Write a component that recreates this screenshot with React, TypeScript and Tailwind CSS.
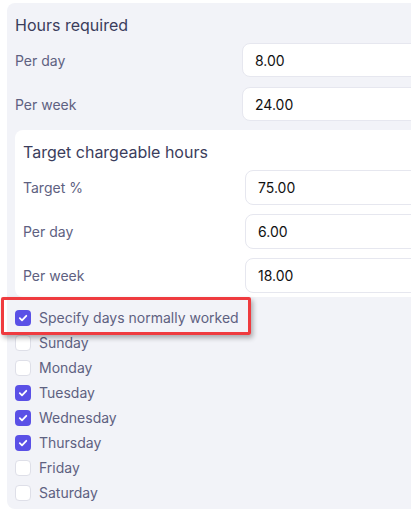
const days = [
  { name: 'Sunday', checked: false },
  { name: 'Monday', checked: false },
  { name: 'Tuesday', checked: true },
  { name: 'Wednesday', checked: true },
  { name: 'Thursday', checked: true },
  { name: 'Friday', checked: false },
  { name: 'Saturday', checked: false },
];

function Box({ checked }: { checked: boolean }) {
  if (checked) {
    return (
      <span className="flex h-4 w-4 shrink-0 items-center justify-center rounded-[4px] bg-[#5a50e6]">
        <svg width="10" height="10" viewBox="0 0 10 10" fill="none">
          <path d="M1.8 5.2 4 7.3 8.3 2.8" stroke="white" strokeWidth="1.8" strokeLinecap="round" strokeLinejoin="round" />
        </svg>
      </span>
    );
  }
  return <span className="h-4 w-4 shrink-0 rounded-[4px] border border-[#dedfe8] bg-white" />;
}

function Field({ label, value, labelW, h }: { label: string; value: string; labelW: string; h: string }) {
  return (
    <div className="flex items-center">
      <div className={`${labelW} shrink-0 text-[14px] text-[#5e6181]`}>{label}</div>
      <div className={`${h} flex flex-1 items-center rounded-lg border border-[#e6e7ef] bg-white pl-3 text-[14px] text-[#111]`}>
        {value}
      </div>
    </div>
  );
}

export default function App() {
  return (
    <div className="relative h-[520px] w-[411px] overflow-hidden bg-white" style={{ fontFamily: 'Inter, "Noto Sans", sans-serif' }}>
      <div className="ml-[7px] mt-[3px] w-[430px] rounded-lg bg-[#f2f3f8] pb-[4px] pl-2 pt-[10px]">
        <h2 className="text-[16px] leading-6 text-[#3b3d5c]">Hours required</h2>
        <div className="mt-[6px] flex flex-col gap-[10px]">
          <Field label="Per day" value="8.00" labelW="w-[227px]" h="h-[34px]" />
          <Field label="Per week" value="24.00" labelW="w-[227px]" h="h-[34px]" />
        </div>

        <div className="mt-[9px] rounded-lg bg-white pb-1 pl-2 pt-[10px]">
          <h3 className="text-[16px] leading-6 text-[#3b3d5c]">Target chargeable hours</h3>
          <div className="mt-[6px] flex flex-col gap-[9px]">
            <Field label="Target %" value="75.00" labelW="w-[222px]" h="h-[35px]" />
            <Field label="Per day" value="6.00" labelW="w-[222px]" h="h-[35px]" />
            <Field label="Per week" value="18.00" labelW="w-[222px]" h="h-[35px]" />
          </div>
        </div>

        <div className="mt-[8px] flex flex-col">
          <label className="flex h-[25px] items-center gap-2 text-[14px] text-[#5e6181]">
            <Box checked />
            Specify days normally worked
          </label>
          {days.map((d) => (
            <label key={d.name} className="flex h-[25px] items-center gap-2 text-[14px] text-[#5e6181]">
              <Box checked={d.checked} />
              {d.name}
            </label>
          ))}
        </div>
      </div>

      <div className="absolute left-[1px] top-[297px] h-[38px] w-[250px] rounded-[2px] border-[3px] border-[#ef3b3f] shadow-[2px_3px_5px_rgba(0,0,0,0.3)]" />
    </div>
  );
}
